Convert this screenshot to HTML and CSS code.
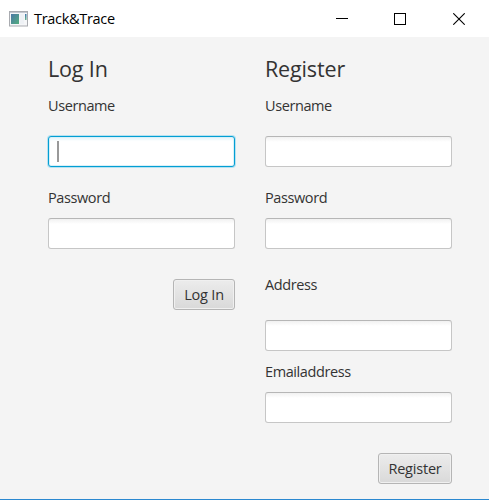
FILE: index.html
```html
<!DOCTYPE html>
<html lang="en">
<head>
<meta charset="utf-8">
<title>Track&amp;Trace</title>
<link rel="stylesheet" href="styles.css">
</head>
<body>
<div class="window">
  <header class="titlebar">
    <svg class="app-icon" width="20" height="16" viewBox="0 0 20 16">
      <defs>
        <linearGradient id="pane" x1="0" y1="0" x2="1" y2="1">
          <stop offset="0" stop-color="#4b78a6"/><stop offset="1" stop-color="#52ad7e"/>
        </linearGradient>
        <linearGradient id="bar" x1="0" y1="0" x2="0" y2="1">
          <stop offset="0" stop-color="#3f78b0"/><stop offset="1" stop-color="#69b58a"/>
        </linearGradient>
      </defs>
      <rect x="0.5" y="0.5" width="18" height="14.5" fill="#f5f6f8" stroke="#a9abb0"/>
      <path d="M1 1.5h17" stroke="#c3c7d0"/>
      <rect x="2" y="3" width="8" height="10" fill="url(#pane)"/>
      <rect x="11" y="3" width="4" height="10" fill="#eef1f5"/>
      <rect x="16" y="3" width="1.5" height="6" fill="url(#bar)"/>
    </svg>
    <h1 class="title">Track&amp;Trace</h1>
    <div class="controls">
      <svg width="12" height="12" viewBox="0 0 12 12"><path d="M0 5.5h12" stroke="#000"/></svg>
      <svg width="12" height="12" viewBox="0 0 12 12"><rect x="0.5" y="0.5" width="11" height="11" fill="none" stroke="#000"/></svg>
      <svg class="close" width="12" height="12" viewBox="0 0 12 12"><path d="M0.3 0.3 11.7 11.7M11.7 0.3 0.3 11.7" stroke="#000" stroke-width="1.1"/></svg>
    </div>
  </header>
  <main class="content">
    <section class="form">
      <h2 class="heading">Log In</h2>
      <label class="label">Username</label>
      <div class="field focused gap-large"><span class="caret"></span></div>
      <label class="label label-password">Password</label>
      <div class="field"></div>
      <button class="button button-login">Log In</button>
    </section>
    <section class="form">
      <h2 class="heading">Register</h2>
      <label class="label">Username</label>
      <div class="field gap-large"></div>
      <label class="label label-password">Password</label>
      <div class="field"></div>
      <label class="label label-address">Address</label>
      <div class="field gap-address"></div>
      <label class="label label-email">Emailaddress</label>
      <div class="field"></div>
      <button class="button button-register">Register</button>
    </section>
  </main>
</div>
</body>
</html>
```
FILE: styles.css
```css
* { box-sizing: border-box; }

body {
  margin: 0;
  font-family: "Open Sans", "Noto Sans", sans-serif;
  color: #333;
}

.window {
  display: flex;
  flex-direction: column;
  height: 500px;
  background: #f4f4f4;
  border-bottom: 1px solid #2b88d0;
}

.titlebar {
  display: flex;
  align-items: center;
  height: 37px;
  padding: 0 24px 0 9px;
  background: #fff;
}

.app-icon { flex: none; }

.title {
  margin: 0 0 0 5px;
  font-size: 14.5px;
  font-weight: 400;
  line-height: 20px;
  letter-spacing: -0.3px;
  color: #000;
}

.controls {
  display: flex;
  gap: 46px;
  margin-left: auto;
}

.controls svg { display: block; }
.controls .close { margin-left: 1px; }

.content {
  display: flex;
  gap: 30px;
  padding: 17px 0 0 48px;
}

.form {
  display: flex;
  flex-direction: column;
  width: 187px;
}

.heading {
  margin: 0 0 12px;
  font-size: 21.5px;
  font-weight: 400;
  line-height: 30px;
  letter-spacing: -0.15px;
}

.label {
  height: 20px;
  margin-bottom: 10px;
  font-size: 14.5px;
  line-height: 20px;
  letter-spacing: -0.4px;
  white-space: nowrap;
}

.label-password { margin-top: 21px; }
.label-address { margin-top: 26px; }
.label-email { margin-top: 11px; }

.field {
  height: 31px;
  padding: 5px 9px;
  border: 1px solid #c6c6c6;
  border-top-color: #b6b6b6;
  border-radius: 3px;
  background: linear-gradient(#f1f1f1, #fff 5px);
}

.gap-large { margin-top: 10px; }
.gap-address { margin-top: 15px; }

.focused {
  padding-top: 4px;
  border-color: #039ed3;
  background: #fff;
  box-shadow: 0 0 0 1px #b6e2f1, inset 0 0 0 1px #d9f0f8, inset 0 3px 2px #edf7fb;
}

.caret {
  display: block;
  width: 2px;
  height: 21px;
  margin-left: -1px;
  background: #999;
}

.button {
  align-self: flex-end;
  height: 31px;
  margin-top: 30px;
  padding: 0;
  border: 1px solid #b5b5b5;
  border-radius: 3px;
  background: linear-gradient(#ececec, #d9d9d9);
  box-shadow: inset 0 0 0 1px #f0f0f0;
  font: 14.5px/29px "Open Sans", "Noto Sans", sans-serif;
  letter-spacing: -0.2px;
  color: #333;
}

.button-login { width: 62px; }
.button-register { width: 74px; }
```
